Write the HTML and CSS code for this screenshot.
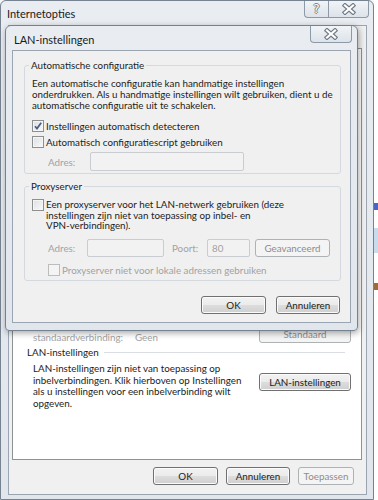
FILE: index.html
```html
<!DOCTYPE html>
<html lang="nl">
<head>
    <meta charset="UTF-8">
    <meta name="viewport" content="width=device-width, initial-scale=1.0">
    <title>LAN-instellingen</title>
    <link rel="stylesheet" href="styles.css">
</head>
<body>
    <div class="desk">
        <!-- Internetopties window (behind) -->
        <div class="window main-window">
            <div class="titlebar">
                <span class="title">Internetopties</span>
                <div class="caption-btns">
                    <span class="cap cap-help">?</span>
                    <span class="cap cap-close">
                        <svg width="16" height="12" viewBox="0 0 16 12"><path d="M4 2.5L12 9.5M12 2.5L4 9.5" stroke="#6f7a87" stroke-width="4.4" stroke-linecap="square"/><path d="M4 2.5L12 9.5M12 2.5L4 9.5" stroke="#fff" stroke-width="2.2" stroke-linecap="square"/></svg>
                    </span>
                </div>
            </div>
            <div class="client">
                <div class="tabpanel">
                    <div class="conn-row">
                        <span class="conn-label muted">standaardverbinding:</span>
                        <span class="conn-value muted">Geen</span>
                        <button class="btn btn-disabled btn-wide">Standaard</button>
                    </div>
                    <div class="section-head">
                        <span>LAN-instellingen</span>
                        <span class="rule"></span>
                    </div>
                    <div class="lan-row">
                        <p>LAN-instellingen zijn niet van toepassing op<br>inbelverbindingen. Klik hierboven op Instellingen<br>als u instellingen voor een inbelverbinding wilt<br>opgeven.</p>
                        <button class="btn btn-wide btn-lan">LAN-instellingen</button>
                    </div>
                </div>
                <div class="footer">
                    <button class="btn btn-ok">OK</button>
                    <button class="btn btn-cancel">Annuleren</button>
                    <button class="btn btn-disabled btn-apply">Toepassen</button>
                </div>
            </div>
        </div>
        <div class="strip">
            <span class="strip-a"></span>
            <span class="strip-b"></span>
            <span class="strip-c"></span>
        </div>

        <!-- LAN-instellingen dialog (on top) -->
        <div class="window dialog">
            <div class="titlebar">
                <span class="title">LAN-instellingen</span>
                <div class="caption-btns">
                    <span class="cap cap-close cap-solo">
                        <svg width="16" height="12" viewBox="0 0 16 12"><path d="M4 2.5L12 9.5M12 2.5L4 9.5" stroke="#6f7a87" stroke-width="4.4" stroke-linecap="square"/><path d="M4 2.5L12 9.5M12 2.5L4 9.5" stroke="#fff" stroke-width="2.2" stroke-linecap="square"/></svg>
                    </span>
                </div>
            </div>
            <div class="client">
                <div class="group group-auto">
                    <span class="legend">Automatische configuratie</span>
                    <p class="group-text">Een automatische configuratie kan handmatige instellingen<br>onderdrukken. Als u handmatige instellingen wilt gebruiken, dient u de<br>automatische configuratie uit te schakelen.</p>
                    <div class="check check-first">
                        <span class="box">
                            <svg width="10" height="10" viewBox="0 0 10 10"><path d="M2 5.2L4 7.6L8.2 1.8" fill="none" stroke="#4b5c86" stroke-width="1.7"/></svg>
                        </span>
                        <span>Instellingen automatisch detecteren</span>
                    </div>
                    <div class="check">
                        <span class="box"></span>
                        <span>Automatisch configuratiescript gebruiken</span>
                    </div>
                    <div class="field-row field-row-auto">
                        <span class="field-label muted">Adres:</span>
                        <span class="field field-script"></span>
                    </div>
                </div>

                <div class="group group-proxy">
                    <span class="legend">Proxyserver</span>
                    <div class="check check-multi">
                        <span class="box"></span>
                        <span>Een proxyserver voor het LAN-netwerk gebruiken (deze<br>instellingen zijn niet van toepassing op inbel- en<br>VPN-verbindingen).</span>
                    </div>
                    <div class="field-row field-row-proxy">
                        <span class="field-label field-label-short muted">Adres:</span>
                        <span class="field field-address"></span>
                        <span class="field-label port-label muted">Poort:</span>
                        <span class="field field-port muted">80</span>
                        <button class="btn btn-disabled btn-adv">Geavanceerd</button>
                    </div>
                    <div class="check check-bypass muted">
                        <span class="box box-disabled"></span>
                        <span>Proxyserver niet voor lokale adressen gebruiken</span>
                    </div>
                </div>

                <div class="dialog-buttons">
                    <button class="btn btn-ok">OK</button>
                    <button class="btn btn-cancel">Annuleren</button>
                </div>
            </div>
        </div>
    </div>
</body>
</html>
```

FILE: styles.css
```css
* {
    margin: 0;
    padding: 0;
    box-sizing: border-box;
}

body {
    width: 378px;
    height: 500px;
    overflow: hidden;
    font-family: Lato, "Noto Sans", sans-serif;
    font-size: 9.8px;
    color: #1c1c1c;
    background: #f4f5f6;
}

.desk {
    position: relative;
    display: flex;
    height: 500px;
}

.muted {
    color: #a2a2a2;
}

/* window chrome */

.window {
    display: flex;
    flex-direction: column;
    border: 1px solid #76828f;
    border-radius: 6px 6px 0 0;
    background: linear-gradient(#e9edf2, #e0e6ec);
}

.main-window {
    width: 374px;
    height: 500px;
    flex-shrink: 0;
}

.titlebar {
    display: flex;
    justify-content: space-between;
    align-items: flex-start;
    height: 24px;
    flex-shrink: 0;
}

.title {
    font-size: 11px;
    line-height: 11px;
    padding: 6.5px 0 0 6px;
    color: #1a1a1a;
}

.caption-btns {
    display: flex;
    margin-right: 4px;
}

.cap {
    display: flex;
    align-items: center;
    justify-content: center;
    height: 17px;
    border: 1px solid #8e99a6;
    border-top: none;
    background: linear-gradient(#f1f4f7, #dde3ea);
}

.cap-help {
    width: 24px;
    border-right: none;
    border-radius: 0 0 0 4px;
    font: 12px "DejaVu Sans", sans-serif;
    color: #fff;
    text-shadow: 1px 0 0 #76818e, -1px 0 0 #76818e, 0 1px 0 #76818e, 0 -1px 0 #76818e;
}

.cap-close {
    width: 41px;
    border-radius: 0 0 4px 0;
}

.cap-solo {
    width: 42px;
    border-radius: 0 0 4px 4px;
}

.client {
    flex: 1;
    display: flex;
    flex-direction: column;
    margin: 0 6px 4px 7px;
    border: 1px solid #9aa5b1;
    background: #f0f0f0;
}

/* Internetopties content */

.tabpanel {
    height: 412px;
    margin: 22px 4px 0 3px;
    border: 1px solid #8e9398;
    background: #fff;
}

.conn-row {
    display: flex;
    align-items: flex-start;
    height: 18px;
    margin-top: 276px;
    padding: 0 10px 0 20px;
}

.conn-label {
    width: 102px;
    margin-top: 6.5px;
    line-height: 11px;
}

.conn-value {
    margin-top: 6.5px;
    line-height: 11px;
}

.btn-wide {
    width: 92px;
    margin-left: auto;
}

.section-head {
    display: flex;
    align-items: center;
    margin-top: 3.5px;
    padding: 0 16px 0 14px;
    line-height: 11px;
}

.rule {
    flex: 1;
    height: 1px;
    margin-left: 5px;
    background: #dadde1;
}

.lan-row {
    display: flex;
    align-items: flex-start;
    margin-top: 5.5px;
    padding: 0 10px 0 20px;
}

.lan-row p {
    line-height: 11.7px;
    white-space: nowrap;
}

.btn-lan {
    margin-top: 10px;
}

.footer {
    display: flex;
    justify-content: flex-end;
    gap: 8px;
    margin-top: 7px;
    padding-right: 12px;
}

/* buttons */

.btn {
    height: 18px;
    font: inherit;
    color: #1c1c1c;
    border: 1px solid #707070;
    border-radius: 3px;
    background: linear-gradient(#f2f2f2 0%, #ebebeb 50%, #dddddd 51%, #cfcfcf 100%);
    box-shadow: inset 0 0 0 1px #fbfbfb;
}

.btn-disabled {
    color: #8d8d8d;
    border-color: #adb2b5;
    background: #f4f4f4;
    box-shadow: none;
}

.btn-ok {
    width: 65px;
}

.btn-cancel {
    width: 64px;
}

.btn-apply {
    width: 56px;
}

/* LAN-instellingen dialog */

.dialog {
    position: absolute;
    left: 5px;
    top: 25px;
    width: 353px;
    height: 306px;
    border-radius: 6px 6px 4px 4px;
    box-shadow: 1px 2px 6px rgba(0, 0, 0, 0.35);
}

.dialog .title {
    padding: 7.5px 0 0 8px;
}

.dialog .caption-btns {
    margin-right: 5px;
}

.dialog .client {
    margin: 0 6px 7px 6px;
}

.group {
    position: relative;
    width: 317px;
    margin-left: 11px;
    padding-left: 7px;
    border: 1px solid #d3d9df;
    border-radius: 3px;
}

.group-auto {
    height: 109px;
    margin-top: 14px;
}

.group-proxy {
    height: 95px;
    margin-top: 12px;
}

.legend {
    position: absolute;
    left: 4px;
    top: -6px;
    padding: 0 2px;
    line-height: 11px;
    background: #f0f0f0;
}

.group-text {
    margin-top: 11.5px;
    line-height: 11px;
    white-space: nowrap;
}

.check {
    display: flex;
    align-items: center;
    gap: 2px;
    height: 12px;
    margin-top: 4px;
    line-height: 12px;
    white-space: nowrap;
}

.check-first {
    margin-top: 9.5px;
}

.check-multi {
    align-items: flex-start;
    height: auto;
    margin-top: 12px;
    line-height: 10.5px;
}

.check-bypass {
    margin-top: 7px;
    padding-left: 16px;
}

.box {
    display: flex;
    align-items: center;
    justify-content: center;
    width: 12px;
    height: 12px;
    flex-shrink: 0;
    border: 1px solid #8e8f8f;
    background: linear-gradient(135deg, #dcdfe2, #f8f9fa);
    box-shadow: inset 0 0 0 1px #f5f5f5;
}

.box-disabled {
    border-color: #bcbcbc;
    background: #f4f4f4;
    box-shadow: none;
}

.field-row {
    display: flex;
    align-items: center;
    white-space: nowrap;
}

.field-row-auto {
    height: 19px;
    margin-top: 4px;
}

.field-row-proxy {
    height: 18px;
    margin-top: 8.5px;
}

.field-label {
    width: 58px;
    padding-left: 16px;
}

.field-label-short {
    width: 55px;
}

.port-label {
    width: 43px;
    padding-left: 8px;
}

.field {
    height: 100%;
    border: 1px solid #c9cdd1;
    border-radius: 2px;
    background: #f2f2f2;
}

.field-script {
    width: 154px;
}

.field-address {
    width: 77px;
}

.field-port {
    width: 43px;
    padding-left: 4px;
    line-height: 16px;
}

.btn-adv {
    width: 75px;
    margin-left: 5px;
}

.dialog-buttons {
    display: flex;
    justify-content: flex-end;
    gap: 10px;
    margin-top: 15px;
    padding-right: 10px;
}

/* bit of the desktop behind the window */

.strip {
    display: flex;
    flex-direction: column;
    width: 4px;
    background: #fff;
}

.strip-a {
    height: 7px;
    margin-top: 203px;
    background: #4a64c4;
}

.strip-b {
    height: 25px;
    margin-top: 18px;
    background: #c8dcee;
}

.strip-c {
    height: 7px;
    margin-top: 30px;
    background: #9c6b3c;
}
```
